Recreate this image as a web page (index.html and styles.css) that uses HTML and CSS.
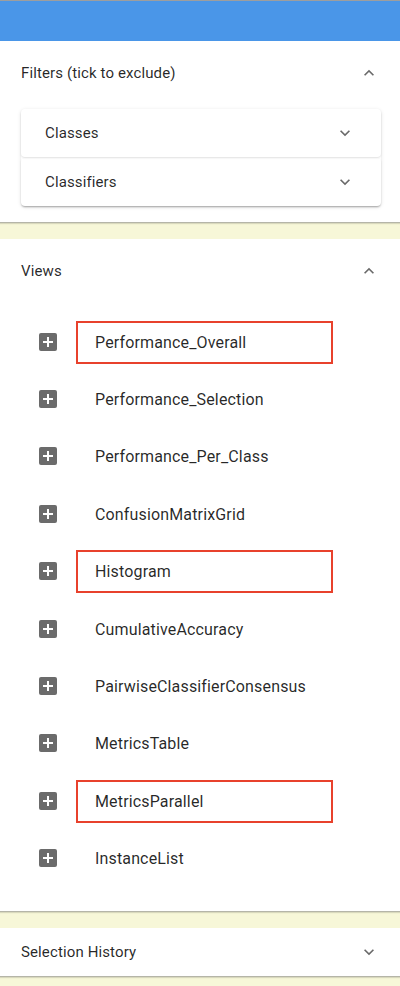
FILE: index.html
```html
<!DOCTYPE html>
<html>
<head>
<meta charset="utf-8">
<link rel="stylesheet" href="styles.css">
</head>
<body>
<div class="topbar"></div>

<section class="panel">
  <div class="panel-header">
    <span>Filters (tick to exclude)</span>
    <svg class="chev" width="14" height="14" viewBox="0 0 24 24"><path d="M7.41 15.41 12 10.83l4.59 4.58L18 14l-6-6-6 6z"/></svg>
  </div>
  <div class="panel-body">
    <div class="card">
      <div class="card-row">
        <span>Classes</span>
        <svg class="chev" width="14" height="14" viewBox="0 0 24 24"><path d="M7.41 8.59 12 13.17l4.59-4.58L18 10l-6 6-6-6z"/></svg>
      </div>
      <div class="card-row">
        <span>Classifiers</span>
        <svg class="chev" width="14" height="14" viewBox="0 0 24 24"><path d="M7.41 8.59 12 13.17l4.59-4.58L18 10l-6 6-6-6z"/></svg>
      </div>
    </div>
  </div>
</section>

<section class="panel views">
  <div class="panel-header">
    <span>Views</span>
    <svg class="chev" width="14" height="14" viewBox="0 0 24 24"><path d="M7.41 15.41 12 10.83l4.59 4.58L18 14l-6-6-6 6z"/></svg>
  </div>
  <ul class="view-list">
    <li class="view-item"><span class="plus"></span><span class="view-name hl">Performance_Overall</span></li>
    <li class="view-item"><span class="plus"></span><span class="view-name">Performance_Selection</span></li>
    <li class="view-item"><span class="plus"></span><span class="view-name">Performance_Per_Class</span></li>
    <li class="view-item"><span class="plus"></span><span class="view-name">ConfusionMatrixGrid</span></li>
    <li class="view-item"><span class="plus"></span><span class="view-name hl">Histogram</span></li>
    <li class="view-item"><span class="plus"></span><span class="view-name">CumulativeAccuracy</span></li>
    <li class="view-item"><span class="plus"></span><span class="view-name">PairwiseClassifierConsensus</span></li>
    <li class="view-item"><span class="plus"></span><span class="view-name">MetricsTable</span></li>
    <li class="view-item"><span class="plus"></span><span class="view-name hl">MetricsParallel</span></li>
    <li class="view-item"><span class="plus"></span><span class="view-name">InstanceList</span></li>
  </ul>
</section>

<section class="panel collapsed">
  <div class="panel-header small">
    <span>Selection History</span>
    <svg class="chev" width="14" height="14" viewBox="0 0 24 24"><path d="M7.41 8.59 12 13.17l4.59-4.58L18 10l-6 6-6-6z"/></svg>
  </div>
</section>
</body>
</html>
```

FILE: styles.css
```css
html, body {
  margin: 0;
  padding: 0;
}
body {
  background: #f7f7d8;
  font-family: Roboto, "Noto Sans", sans-serif;
  font-size: 15px;
  letter-spacing: 0.12px;
  color: rgba(0, 0, 0, 0.85);
  width: 400px;
  height: 986px;
  overflow: hidden;
}
.topbar {
  height: 40px;
  background: #4a96e8;
  border-top: 1px solid #9e9e9e;
}
.panel {
  background: #fff;
  box-shadow: 0 1px 0 0 #b5b5a8, 0 2px 1px 0 rgba(0,0,0,0.12);
  margin-bottom: 17px;
}
.panel-header {
  height: 64px;
  display: flex;
  align-items: center;
  justify-content: space-between;
  padding: 0 21px 0 21px;
}
.panel-header.small {
  height: 48px;
}
.chev {
  fill: #6a6a6a;
  width: 20px;
  height: 20px;
}
.panel-body {
  padding: 4px 19px 16px 21px;
}
.card {
  border-radius: 4px;
  box-shadow: 0 2px 2px -1px rgba(0,0,0,0.22), 0 1px 4px 0 rgba(0,0,0,0.10);
}
.card-row {
  height: 48px;
  display: flex;
  align-items: center;
  justify-content: space-between;
  padding: 0 26px 0 24px;
  border-radius: 4px;
  box-shadow: 0 1px 2px 0 rgba(0,0,0,0.12);
}
.card-row + .card-row {
  margin-top: 1px;
}
.view-list {
  list-style: none;
  margin: 0;
  padding: 10px 0 24px 0;
}
.view-item {
  height: 57.4px;
  display: flex;
  align-items: center;
  padding-left: 39px;
}
.plus {
  width: 18px;
  height: 18px;
  border-radius: 2px;
  background: #6b6b6b;
  position: relative;
  flex: none;
}
.plus::before, .plus::after {
  content: "";
  position: absolute;
  background: #fff;
}
.plus::before {
  left: 4px;
  top: 8px;
  width: 10px;
  height: 2px;
}
.plus::after {
  left: 8px;
  top: 4px;
  width: 2px;
  height: 10px;
}
.view-name {
  margin-left: 19px;
  width: 236px;
  height: 39px;
  display: flex;
  align-items: center;
  padding-left: 17px;
  border: 2px solid transparent;
  margin-top: 1px;
  font-size: 16px;
  letter-spacing: 0.15px;
}
.view-name.hl {
  border-color: #e8412c;
}
```
